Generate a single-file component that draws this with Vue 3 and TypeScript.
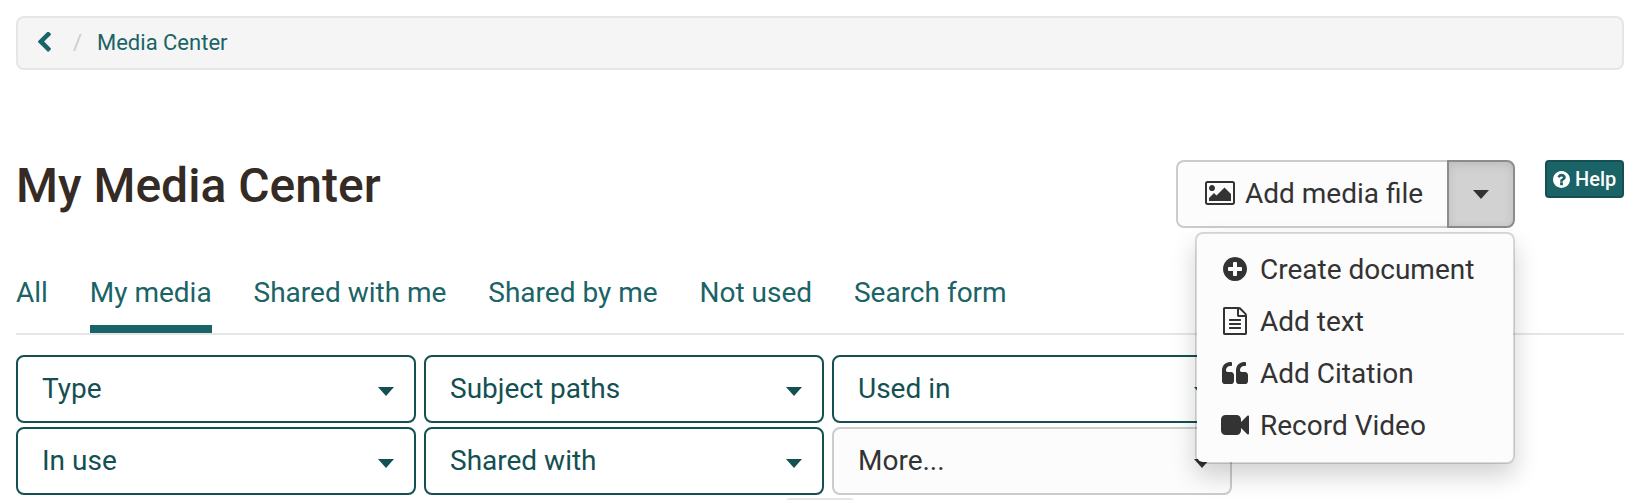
<script setup lang="ts">
interface MenuItem {
  label: string
  viewBox: string
  width: number
  height: number
  path: string
}

const disc =
  'm320-64q0 209-103 385.5t-279.5 279.5-385.5 103-385.5-103-279.5-279.5-103-385.5 103-385.5 279.5-279.5 385.5-103 385.5 103 279.5 279.5 103 385.5z'

const tabs: string[] = ['All', 'My media', 'Shared with me', 'Shared by me', 'Not used', 'Search form']
const activeTab = 'My media'

const filters: string[] = ['Type', 'Subject paths', 'Used in', 'In use', 'Shared with', 'More...']

const menu: MenuItem[] = [
  {
    label: 'Create document',
    viewBox: '128 128 1536 1536',
    width: 24,
    height: 24,
    path:
      'M1344 960v-128q0-26-19-45t-45-19h-256v-256q0-26-19-45t-45-19h-128q-26 0-45 19t-19 45v256h-256q-26 0-45 19t-19 45v128q0 26 19 45t45 19h256v256q0 26 19 45t45 19h128q26 0 45-19t19-45v-256h256q26 0 45-19t19-45z' +
      disc,
  },
  {
    label: 'Add text',
    viewBox: '128 0 1536 1792',
    width: 24,
    height: 28,
    path:
      'M1596 380q28 28 48 76t20 88v1152q0 40-28 68t-68 28h-1344q-40 0-68-28t-28-68v-1600q0-40 28-68t68-28h896q40 0 88 20t76 48zm-444-244v376h376q-10-29-22-41l-313-313q-12-12-41-22zm384 1528v-1024h-416q-40 0-68-28t-28-68v-416h-768v1536h1280zm-1024-864q0-14 9-23t23-9h704q14 0 23 9t9 23v64q0 14-9 23t-23 9h-704q-14 0-23-9t-9-23v-64zm736 224q14 0 23 9t9 23v64q0 14-9 23t-23 9h-704q-14 0-23-9t-9-23v-64q0-14 9-23t23-9h704zm0 256q14 0 23 9t9 23v64q0 14-9 23t-23 9h-704q-14 0-23-9t-9-23v-64q0-14 9-23t23-9h704z',
  },
  {
    label: 'Add Citation',
    viewBox: '64 128 1664 1408',
    width: 26,
    height: 22,
    path:
      'M832 960v384q0 80-56 136t-136 56h-384q-80 0-136-56t-56-136v-704q0-104 40.5-198.5t109.5-163.5 163.5-109.5 198.5-40.5h64q26 0 45 19t19 45v128q0 26-19 45t-45 19h-64q-106 0-181 75t-75 181v32q0 40 28 68t68 28h224q80 0 136 56t56 136zm896 0v384q0 80-56 136t-136 56h-384q-80 0-136-56t-56-136v-704q0-104 40.5-198.5t109.5-163.5 163.5-109.5 198.5-40.5h64q26 0 45 19t19 45v128q0 26-19 45t-45 19h-64q-106 0-181 75t-75 181v32q0 40 28 68t68 28h224q80 0 136 56t56 136z',
  },
  {
    label: 'Record Video',
    viewBox: '0 256 1792 1280',
    width: 28,
    height: 20,
    path:
      'M1792 352v1088q0 42-39 59-13 5-25 5-27 0-45-19l-403-403v166q0 119-84.5 203.5t-203.5 84.5h-704q-119 0-203.5-84.5t-84.5-203.5v-704q0-119 84.5-203.5t203.5-84.5h704q119 0 203.5 84.5t84.5 203.5v165l403-402q18-19 45-19 12 0 25 5 39 17 39 59z',
  },
]

const helpPath =
  'M1024 1376v-192q0-14-9-23t-23-9h-192q-14 0-23 9t-9 23v192q0 14 9 23t23 9h192q14 0 23-9t9-23zm256-672q0-88-55.5-163t-138.5-116-170-41q-243 0-371 213-15 24 8 42l132 100q7 6 19 6 16 0 25-12 53-68 86-92 34-24 86-24 48 0 85.5 26t37.5 59q0 38-20 61t-68 45q-63 28-115.5 86.5t-52.5 125.5v36q0 14 9 23t23 9h192q14 0 23-9t9-23q0-19 21.5-49.5t54.5-49.5q32-18 49-28.5t46-35 44.5-48 28-60.5 12.5-81zm384 192q0 209-103 385.5t-279.5 279.5-385.5 103-385.5-103-279.5-279.5-103-385.5 103-385.5 279.5-279.5 385.5-103 385.5 103 279.5 279.5 103 385.5z'
</script>

<template>
  <main class="page">
    <nav class="crumbs">
      <svg class="back" viewBox="410 90 1036 1548" aria-hidden="true">
        <path
          d="M1427 301l-531 531 531 531q19 19 19 45t-19 45l-166 166q-19 19-45 19t-45-19l-742-742q-19-19-19-45t19-45l742-742q19-19 45-19t45 19l166 166q19 19 19 45t-19 45z"
        />
      </svg>
      <span class="slash">/</span>
      <a class="crumb">Media Center</a>
    </nav>

    <header class="head">
      <h1>My Media Center</h1>
      <div class="group">
        <button class="add" type="button">
          <svg class="picture" viewBox="64 128 1920 1536" aria-hidden="true">
            <path
              d="M704 576q0 80-56 136t-136 56-136-56-56-136 56-136 136-56 136 56 56 136zm1024 384v448h-1408v-192l320-320 160 160 512-512zm96-704h-1600q-13 0-22.5 9.5t-9.5 22.5v1216q0 13 9.5 22.5t22.5 9.5h1600q13 0 22.5-9.5t9.5-22.5v-1216q0-13-9.5-22.5t-22.5-9.5zm160 32v1216q0 66-47 113t-113 47h-1600q-66 0-113-47t-47-113v-1216q0-66 47-113t113-47h1600q66 0 113 47t47 113z"
            />
          </svg>
          <span class="label">Add media file</span>
        </button>
        <button class="toggle" type="button" aria-label="More actions"><i class="caret"></i></button>
        <ul class="menu">
          <li v-for="item in menu" :key="item.label">
            <span class="slot">
              <svg :viewBox="item.viewBox" :width="item.width" :height="item.height" aria-hidden="true">
                <path :d="item.path" />
              </svg>
            </span>
            <span class="label">{{ item.label }}</span>
          </li>
        </ul>
      </div>
      <button class="help" type="button">
        <svg viewBox="128 128 1536 1536" aria-hidden="true"><path :d="helpPath" /></svg>
        <span>Help</span>
      </button>
    </header>

    <nav class="tabs">
      <a v-for="tab in tabs" :key="tab" :class="{ active: tab === activeTab }">{{ tab }}</a>
    </nav>

    <section class="filters">
      <button v-for="name in filters" :key="name" type="button" :class="['filter', { more: name === 'More...' }]">
        <span class="label">{{ name }}</span>
        <i class="caret"></i>
      </button>
    </section>

    <div class="handle"></div>
  </main>
</template>

<style>
body {
  background: #fff;
  overflow: hidden;
}
</style>

<style scoped>
.page {
  box-sizing: border-box;
  width: 1642px;
  height: 500px;
  padding: 16px 18px 0 16px;
  overflow: hidden;
  font-family: Roboto, "Liberation Sans", sans-serif;
  font-size: 28px;
  line-height: 40px;
  color: #333;
}
.page * {
  box-sizing: border-box;
}
button {
  margin: 0;
  font: inherit;
  color: inherit;
}
svg {
  display: block;
  flex: none;
  fill: currentColor;
}
.label {
  padding-top: 2px;
}
.crumbs {
  display: flex;
  align-items: center;
  height: 54px;
  padding: 0 0 0 20px;
  border: 2px solid #e6e6e6;
  border-radius: 8px;
  background: #f5f5f5;
  color: #1a6366;
  font-size: 22px;
}
.back {
  width: 13px;
  height: 20px;
  margin-top: -3px;
}
.slash {
  width: 9px;
  margin: 0 15px 0 22px;
  color: #ccc;
}
.head {
  display: flex;
  align-items: flex-start;
  height: 108px;
  margin-top: 90px;
}
h1 {
  margin: -4px auto 0 0;
  font-size: 48px;
  line-height: 60px;
  font-weight: 500;
  color: #352b25;
}
.group {
  position: relative;
  display: flex;
  width: 339px;
  height: 68px;
  margin-right: 30px;
}
.add {
  display: flex;
  align-items: center;
  width: 271px;
  padding: 0 0 2px 27px;
  border: 2px solid #ccc;
  border-right: 0;
  border-radius: 8px 0 0 8px;
  background: #fcfcfc;
}
.picture {
  width: 30px;
  height: 24px;
  margin-right: 10px;
}
.toggle {
  display: flex;
  align-items: center;
  justify-content: center;
  width: 68px;
  padding: 0;
  border: 2px solid #8c8c8c;
  border-radius: 0 8px 8px 0;
  background: #d2d2d2;
  box-shadow: inset 0 3px 10px rgba(0, 0, 0, 0.1);
}
.caret {
  flex: none;
  width: 0;
  height: 0;
  border: 8px solid transparent;
  border-top: 9px solid currentColor;
  border-bottom: 0;
}
.menu {
  position: absolute;
  z-index: 2;
  top: 72px;
  right: 0;
  width: 320px;
  height: 232px;
  margin: 0;
  padding: 9px 0;
  list-style: none;
  border: 2px solid rgba(0, 0, 0, 0.15);
  border-radius: 8px;
  background: #fcfcfc;
  background-clip: padding-box;
  box-shadow: 0 12px 24px rgba(0, 0, 0, 0.175);
}
.menu li {
  display: flex;
  align-items: center;
  height: 52px;
  padding-left: 24px;
}
.slot {
  display: flex;
  justify-content: center;
  width: 28px;
  margin-right: 11px;
}
.help {
  display: flex;
  align-items: center;
  width: 79px;
  height: 38px;
  padding: 0 0 0 6px;
  border: 2px solid #145052;
  border-radius: 4px;
  background: #1a6366;
  color: #fff;
  font-size: 20px;
  font-weight: 500;
}
.help svg {
  width: 17px;
  height: 17px;
  margin-right: 5px;
}
.tabs {
  display: flex;
  gap: 41.9px;
  height: 67px;
  border-bottom: 2px solid #e6e6e6;
  color: #1a6366;
}
.tabs a {
  height: 65px;
  padding-top: 5px;
}
.tabs .active {
  border-bottom: 8px solid #1a6366;
}
.filters {
  display: grid;
  grid-template-columns: repeat(3, 400px);
  gap: 4px 8px;
  margin-top: 20px;
}
.filter {
  display: flex;
  align-items: center;
  justify-content: space-between;
  height: 68px;
  padding: 0 20px 2px 24px;
  border: 2px solid #145052;
  border-radius: 8px;
  background: #fff;
  color: #145052;
}
.filter .caret {
  margin-top: 6px;
}
.more {
  border-color: #ccc;
  background: #fcfcfc;
  color: #333;
}
.handle {
  width: 68px;
  height: 8px;
  margin: 3px 0 0 770px;
  border-radius: 8px;
  background: #e6e6e6;
}
</style>
